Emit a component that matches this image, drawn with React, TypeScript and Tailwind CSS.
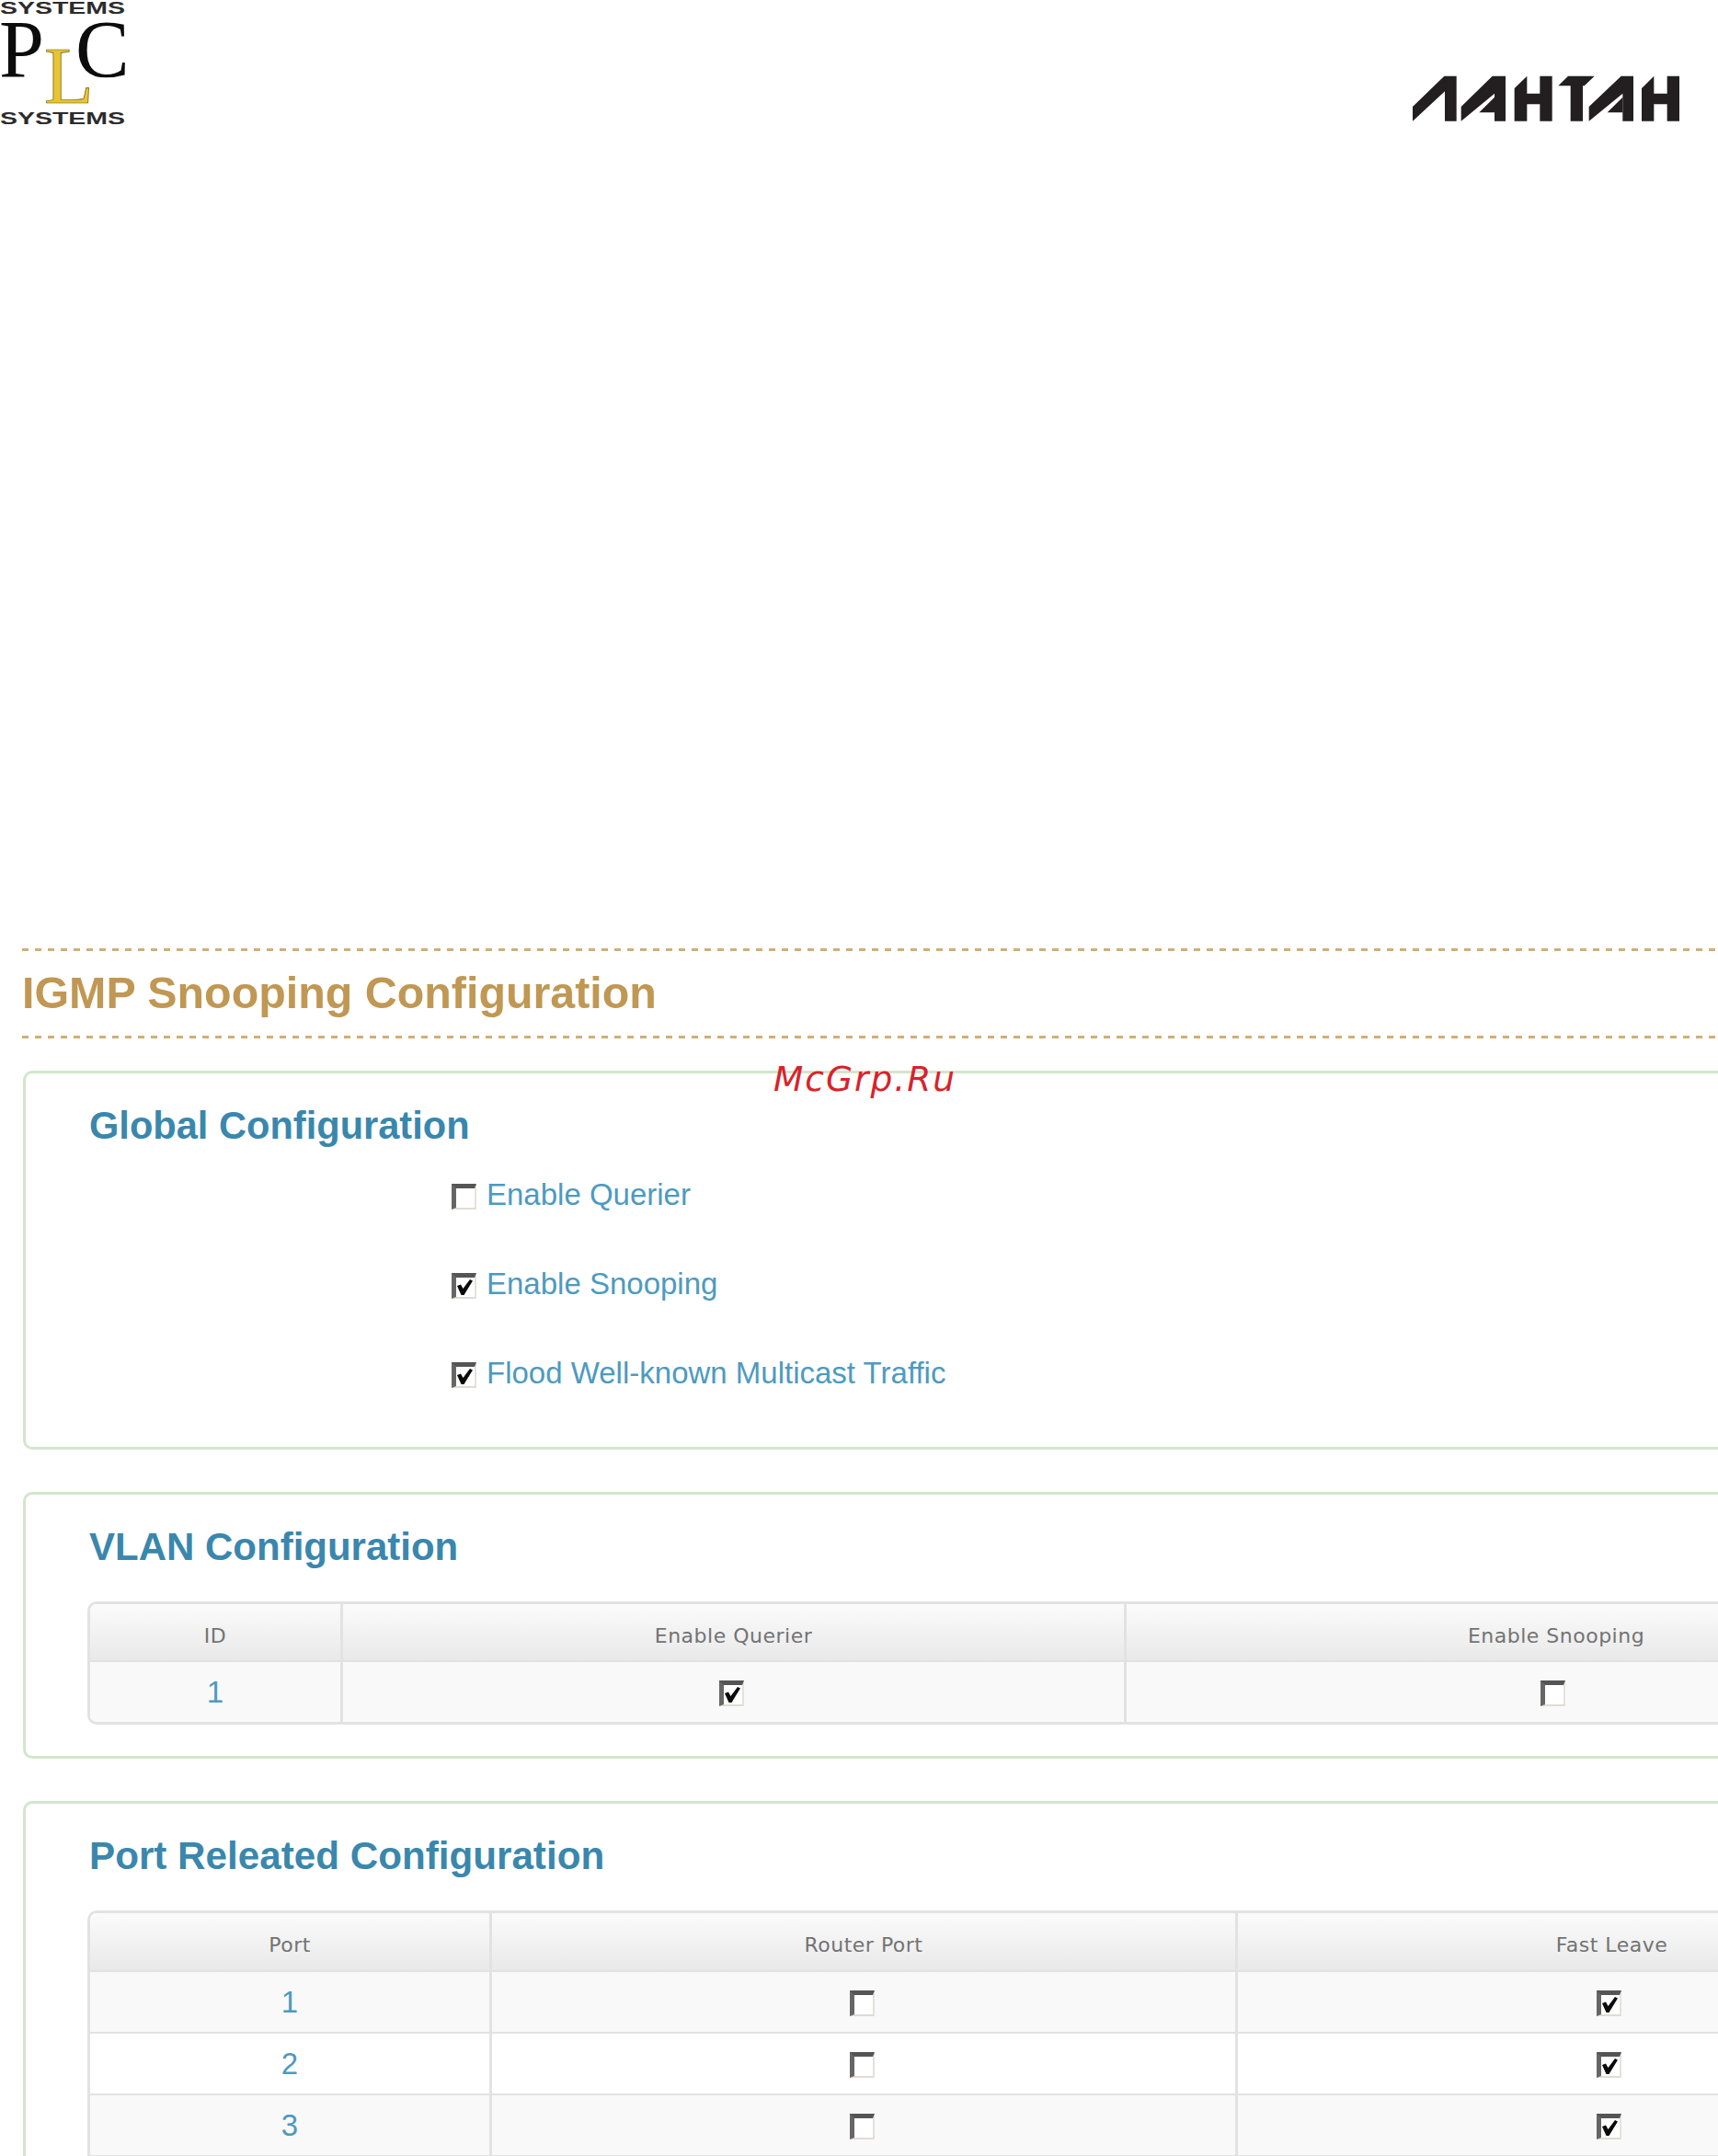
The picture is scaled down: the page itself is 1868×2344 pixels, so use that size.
const sans = "font-['Liberation_Sans',Arial,sans-serif]";

function Box({ checked = false, className = "" }: { checked?: boolean; className?: string }) {
  return (
    <span
      className={`relative inline-block h-[28px] w-[27px] shrink-0 border-t-[5px] border-l-[5px] border-r-2 border-b-2 border-t-[#555555] border-l-[#666666] border-r-[#e4e2dc] border-b-[#dedcd4] bg-white ${className}`}
    >
      {checked && (
        <svg viewBox="0 0 20 21" className="absolute left-0 top-0 h-[21px] w-[20px]">
          <polygon points="1,9 5,7.5 7.5,12 15,2 18,3.5 8.5,19 5.5,19" fill="#0a0a0a" />
        </svg>
      )}
    </span>
  );
}

function PlcLogo() {
  return (
    <svg viewBox="0 0 137 137" className="h-[137px] w-[137px] shrink-0">
      <text x="0" y="15" textLength="136" lengthAdjust="spacingAndGlyphs" fontFamily="Liberation Sans" fontWeight="700" fontSize="18" fill="#2c2c2c">SYSTEMS</text>
      <text x="-1" y="83" fontFamily="Liberation Serif" fontSize="88" fill="#0c0c0c">P</text>
      <text x="82" y="83" fontFamily="Liberation Serif" fontSize="88" fill="#0c0c0c">C</text>
      <text x="48" y="112" fontFamily="Liberation Serif" fontSize="88" fill="#e8c430" stroke="#6b5a1a" strokeWidth="0.7">L</text>
      <text x="0" y="135" textLength="136" lengthAdjust="spacingAndGlyphs" fontFamily="Liberation Sans" fontWeight="700" fontSize="18" fill="#2c2c2c">SYSTEMS</text>
    </svg>
  );
}

function LantanLogo() {
  const fill = "#231f20";
  return (
    <svg viewBox="0 0 1104 270" className="mt-[60px] h-[90px] w-[368px] shrink-0" fill={fill}>
      <polygon points="108,168 211,68 251,68 251,215 213,215 213,118 108,215" />
      <polygon points="266,168 368,68 411,68 411,215 375,215 375,125 266,215" />
      <polygon points="325,187 375,137 375,187" />
      <polygon points="440,108 481,68 481,125 523,125 523,68 563,68 563,215 523,215 523,160 481,160 481,215 440,215" />
      <polygon points="583,100 615,68 701,68 668,100 663,100 663,215 623,215 623,100" />
      <polygon points="683,168 788,68 828,68 828,215 793,215 793,125 683,215" />
      <polygon points="743,187 793,137 793,187" />
      <polygon points="855,108 895,68 895,125 938,125 938,68 978,68 978,215 938,215 938,160 895,160 895,215 855,215" />
    </svg>
  );
}

function Panel({ title, className, titleClass, children }: { title: string; className: string; titleClass: string; children: React.ReactNode }) {
  return (
    <section className={`ml-[25px] w-[2200px] rounded-[10px] border-[3px] border-[#d3e6cb] bg-white pl-[69px] ${className}`}>
      <h2 className={`${sans} ${titleClass} leading-[48px] font-bold text-[#3a87ad]`}>{title}</h2>
      {children}
    </section>
  );
}

function Th({ children, className = "" }: { children: React.ReactNode; className?: string }) {
  return (
    <div className={`flex items-center justify-center border-b-2 border-[#e2e2e2] bg-gradient-to-b from-[#fbfbfb] to-[#e9e9e9] pt-[7px] font-['DejaVu_Sans',sans-serif] text-[22px] tracking-[0.5px] text-[#737373] ${className}`}>
      {children}
    </div>
  );
}

function Td({ children, odd, last = false, className = "" }: { children: React.ReactNode; odd: boolean; last?: boolean; className?: string }) {
  return (
    <div className={`flex items-center justify-center ${last ? "h-[65px]" : "h-[67px] border-b-2 border-[#e2e2e2]"} ${odd ? "bg-[#f9f9f9]" : "bg-white"} ${sans} text-[33px] text-[#4e9abf] ${className}`}>
      {children}
    </div>
  );
}

const rule = "border-r-[3px] border-[#e2e2e2]";
const dash = "h-[3px] w-[1844px] bg-[repeating-linear-gradient(90deg,#d0ae75_0_7px,transparent_7px_14px)]";

export default function App() {
  const ports = [
    [1, false, true],
    [2, false, true],
    [3, false, true],
  ] as const;

  return (
    <div className="relative h-[2344px] w-[1868px] overflow-hidden bg-white">
      <header className="flex h-[1031px] items-start justify-between">
        <PlcLogo />
        <LantanLogo />
      </header>

      <div className="ml-[24px] h-[98px]">
        <div className={dash} />
        <h1 className={`${sans} h-[92px] pt-[21px] text-[48.4px] leading-[48px] font-bold text-[#c09853]`}>IGMP Snooping Configuration</h1>
        <div className={dash} />
      </div>

      <Panel title="Global Configuration" titleClass="text-[41.6px]" className="mt-[35px] h-[412px] pt-[33px]">
        <div className={`ml-[394px] mt-[33px] flex flex-col gap-[61px] ${sans} text-[33px] leading-[36px] text-[#4e9abf]`}>
          {[
            ["Enable Querier", false],
            ["Enable Snooping", true],
            ["Flood Well-known Multicast Traffic", true],
          ].map(([label, on]) => (
            <label key={label as string} className="flex items-center gap-[11px]">
              <Box checked={on as boolean} className="mt-[3px]" />
              <span>{label as string}</span>
            </label>
          ))}
        </div>
      </Panel>

      <Panel title="VLAN Configuration" titleClass="text-[42px]" className="mt-[46px] h-[290px] pt-[33px]">
        <div className="-ml-[2px] mt-[35px] grid w-[2061px] grid-cols-[275px_852px_934px] overflow-hidden rounded-[10px] border-[3px] border-[#e2e2e2]">
          <Th className={`h-[63px] ${rule}`}>ID</Th>
          <Th className={`h-[63px] ${rule}`}>Enable Querier</Th>
          <Th className="h-[63px]">Enable Snooping</Th>
          <Td odd last className={rule}>1</Td>
          <Td odd last className={rule}><Box checked className="mr-[5px] mt-[2px]" /></Td>
          <Td odd last><Box className="mr-[8px] mt-[2px]" /></Td>
        </div>
      </Panel>

      <Panel title="Port Releated Configuration" titleClass="text-[42.2px]" className="mt-[46px] h-[500px] pt-[33px]">
        <div className="-ml-[2px] mt-[35px] grid w-[2061px] grid-cols-[437px_811px_813px] rounded-t-[10px] border-x-[3px] border-t-[3px] border-[#e2e2e2]">
          <Th className={`h-[64px] ${rule} rounded-tl-[10px]`}>Port</Th>
          <Th className={`h-[64px] ${rule}`}>Router Port</Th>
          <Th className="h-[64px]">Fast Leave</Th>
          {ports.map(([p, router, fast], i) => (
            <div key={p} className="contents">
              <Td odd={i % 2 === 0} className={rule}>{p}</Td>
              <Td odd={i % 2 === 0} className={rule}><Box checked={router} className="mr-[4px] mt-[2px]" /></Td>
              <Td odd={i % 2 === 0}><Box checked={fast} className="mr-[6px] mt-[2px]" /></Td>
            </div>
          ))}
        </div>
      </Panel>

      <div className="absolute left-[841px] top-[1151px] font-['DejaVu_Sans',sans-serif] text-[37.5px] leading-[44px] tracking-[2px] text-[#d9222a] italic">McGrp.Ru</div>
    </div>
  );
}
